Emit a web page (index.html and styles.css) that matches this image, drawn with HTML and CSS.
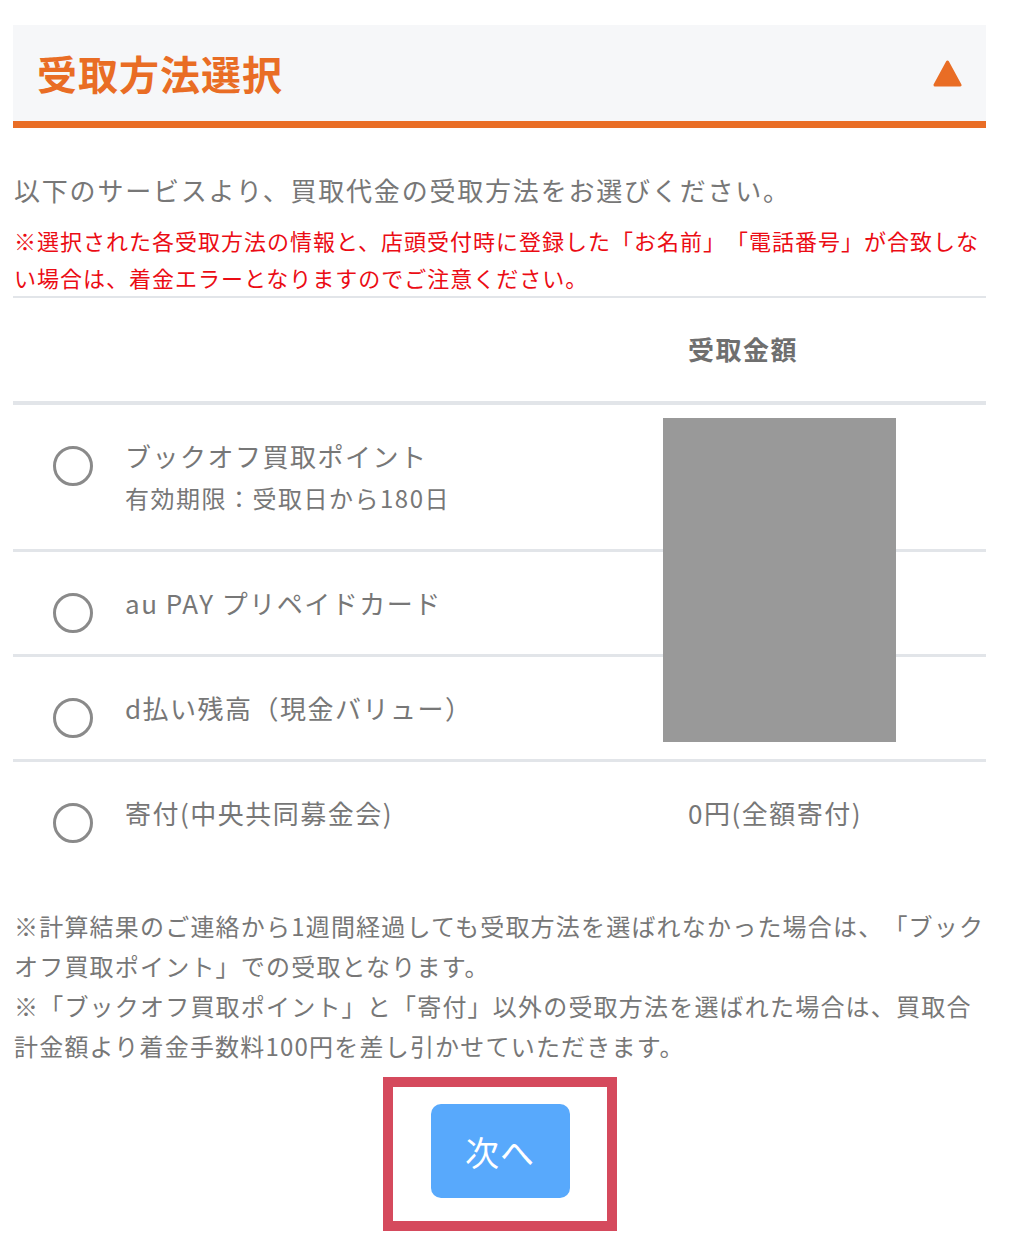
FILE: index.html
```html
<!DOCTYPE html>
<html lang="ja">
<head>
  <meta charset="UTF-8">
  <meta name="viewport" content="width=device-width, initial-scale=1.0">
  <title>受取方法選択</title>
  <link rel="stylesheet" href="styles.css">
</head>
<body>
  <div id="payoutSection">
    <div class="sectionHead">
      <h2>受取方法選択</h2>
      <svg class="toggleIcon" width="29" height="29" viewBox="0 0 29 29">
        <path d="M14.5 3 L27 26 L2 26 Z" fill="#e96d25" stroke="#e96d25" stroke-width="3" stroke-linejoin="round"/>
      </svg>
    </div>

    <p class="lead">以下のサービスより、買取代金の受取方法をお選びください。</p>
    <p class="warning">※選択された各受取方法の情報と、店頭受付時に登録した「お名前」「電話番号」が合致しない場合は、着金エラーとなりますのでご注意ください。</p>

    <div class="methodTable">
      <!-- amounts are masked in the capture -->
      <div class="maskBox"></div>

      <div class="methodRow headRow">
        <div class="methodName"></div>
        <div class="amount">受取金額</div>
      </div>

      <div class="methodRow">
        <span class="radio"></span>
        <div class="methodName">
          ブックオフ買取ポイント
          <div class="methodNote">有効期限：受取日から180日</div>
        </div>
        <div class="amount"></div>
      </div>

      <div class="methodRow">
        <span class="radio"></span>
        <div class="methodName">au PAY プリペイドカード</div>
        <div class="amount"></div>
      </div>

      <div class="methodRow">
        <span class="radio"></span>
        <div class="methodName">d払い残高（現金バリュー）</div>
        <div class="amount"></div>
      </div>

      <div class="methodRow">
        <span class="radio"></span>
        <div class="methodName">寄付(中央共同募金会)</div>
        <div class="amount">0円(全額寄付)</div>
      </div>
    </div>

    <div class="notes">
      <p>※計算結果のご連絡から1週間経過しても受取方法を選ばれなかった場合は、「ブックオフ買取ポイント」での受取となります。</p>
      <p>※「ブックオフ買取ポイント」と「寄付」以外の受取方法を選ばれた場合は、買取合計金額より着金手数料100円を差し引かせていただきます。</p>
    </div>

    <div class="nextWrap">
      <button class="nextButton" type="button">次へ</button>
    </div>
  </div>
</body>
</html>
```

FILE: styles.css
```css
body {
  margin: 0;
  background-color: #fff;
  font-family: "Noto Sans CJK JP", "Noto Sans", sans-serif;
  color: #777;
  text-spacing-trim: space-all;
}

#payoutSection {
  width: 973px;
  margin: 25px 0 0 13px;
}

.sectionHead {
  display: flex;
  align-items: center;
  justify-content: space-between;
  height: 96px;
  padding: 0 24px;
  background-color: #f6f7f9;
  border-bottom: 7px solid #e96d25;
}

.sectionHead h2 {
  margin: 0;
  color: #e96d25;
  font-size: 40px;
  font-weight: 700;
  letter-spacing: 1px;
}

.toggleIcon {
  display: block;
}

.lead {
  margin: 42px 0 0 1px;
  font-size: 26px;
  line-height: 40px;
  letter-spacing: 1.8px;
}

.warning {
  margin: 12px 0 0 1px;
  color: #eb0c14;
  font-size: 22px;
  line-height: 37px;
  letter-spacing: 1px;
}

.methodTable {
  position: relative;
  border-top: 2px solid #e2e5e9;
}

.methodRow {
  display: flex;
  align-items: flex-start;
  padding: 30px 0;
  border-bottom: 3px solid #e2e5e9;
  font-size: 26px;
  line-height: 42px;
  letter-spacing: 1.5px;
}

.methodRow:last-of-type {
  border-bottom: none;
}

.headRow {
  padding: 30px 0 31px;
  border-bottom-width: 4px;
}

.headRow .methodName {
  margin-left: 112px;
}

.headRow .amount {
  color: #6f6f6f;
  font-weight: 700;
}

.radio {
  flex: none;
  box-sizing: border-box;
  width: 40px;
  height: 40px;
  margin: 11px 32px -11px 40px;
  border: 3px solid #8a8a8a;
  border-radius: 50%;
}

.methodName {
  flex: 1;
}

.methodNote {
  font-size: 24px;
  line-height: 42px;
}

.amount {
  width: 298px;
  flex: none;
}

.maskBox {
  position: absolute;
  top: 120px;
  left: 650px;
  width: 233px;
  height: 324px;
  background-color: #999;
}

.notes {
  margin-top: 42px;
}

.notes p {
  margin: 0 0 0 1px;
  font-size: 24px;
  line-height: 40px;
  letter-spacing: 1.2px;
}

.nextWrap {
  box-sizing: border-box;
  width: 234px;
  margin: 11px auto 0;
  padding: 17px 37px 23px 38px;
  border: 10px solid #d54a5d;
}

.nextButton {
  display: block;
  width: 139px;
  height: 94px;
  border: none;
  border-radius: 10px;
  background-color: #58a9fc;
  color: #fff;
  font-family: inherit;
  font-size: 34px;
  letter-spacing: 1px;
  cursor: pointer;
}
```
